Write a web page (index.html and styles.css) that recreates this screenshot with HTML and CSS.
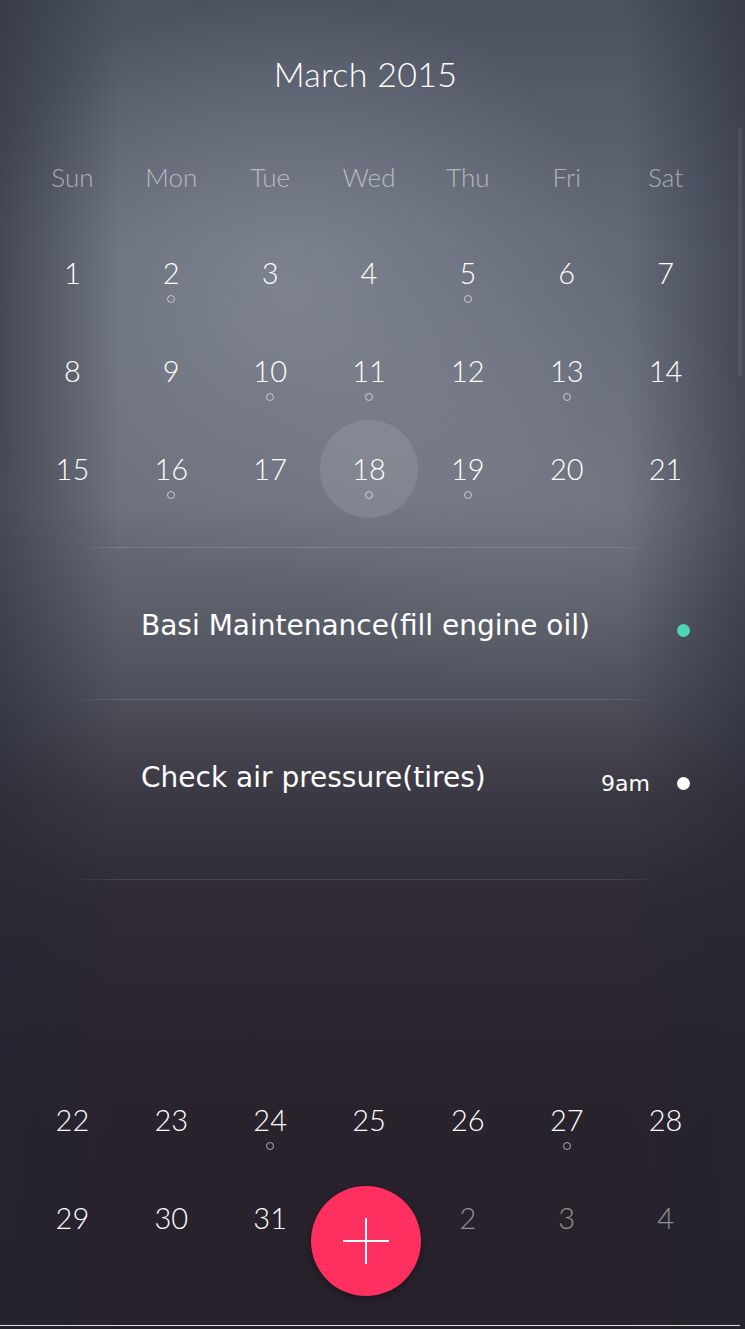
FILE: index.html
```html
<!DOCTYPE html>
<html lang="en">
<head>
<meta charset="utf-8">
<title>March 2015</title>
<link rel="stylesheet" href="styles.css">
</head>
<body>
<div class="app">
  <div class="scrollbar"></div>
  <header class="title">March 2015</header>
  <div class="weekdays">
    <span>Sun</span><span>Mon</span><span>Tue</span><span>Wed</span><span>Thu</span><span>Fri</span><span>Sat</span>
  </div>
  <div class="week">
    <div class="day"><span class="num">1</span></div>
    <div class="day"><span class="num">2</span><i class="mark"></i></div>
    <div class="day"><span class="num">3</span></div>
    <div class="day"><span class="num">4</span></div>
    <div class="day"><span class="num">5</span><i class="mark"></i></div>
    <div class="day"><span class="num">6</span></div>
    <div class="day"><span class="num">7</span></div>
  </div>
  <div class="week">
    <div class="day"><span class="num">8</span></div>
    <div class="day"><span class="num">9</span></div>
    <div class="day"><span class="num">10</span><i class="mark"></i></div>
    <div class="day"><span class="num">11</span><i class="mark"></i></div>
    <div class="day"><span class="num">12</span></div>
    <div class="day"><span class="num">13</span><i class="mark"></i></div>
    <div class="day"><span class="num">14</span></div>
  </div>
  <div class="week">
    <div class="day"><span class="num">15</span></div>
    <div class="day"><span class="num">16</span><i class="mark"></i></div>
    <div class="day"><span class="num">17</span></div>
    <div class="day selected"><span class="num">18</span><i class="mark"></i></div>
    <div class="day"><span class="num">19</span><i class="mark"></i></div>
    <div class="day"><span class="num">20</span></div>
    <div class="day"><span class="num">21</span></div>
  </div>

  <div class="divider first"></div>
  <div class="event event-a">
    <span class="event-name">Basi Maintenance(fill engine oil)</span>
    <span class="event-side"><i class="dot teal"></i></span>
  </div>
  <div class="divider"></div>
  <div class="event event-b">
    <span class="event-name">Check air pressure(tires)</span>
    <span class="event-side"><span class="time">9am</span><i class="dot white"></i></span>
  </div>
  <div class="divider"></div>

  <div class="spacer"></div>

  <div class="week">
    <div class="day"><span class="num">22</span></div>
    <div class="day"><span class="num">23</span></div>
    <div class="day"><span class="num">24</span><i class="mark"></i></div>
    <div class="day"><span class="num">25</span></div>
    <div class="day"><span class="num">26</span></div>
    <div class="day"><span class="num">27</span><i class="mark"></i></div>
    <div class="day"><span class="num">28</span></div>
  </div>
  <div class="week">
    <div class="day"><span class="num">29</span></div>
    <div class="day"><span class="num">30</span></div>
    <div class="day"><span class="num">31</span></div>
    <div class="day other"><span class="num">1</span></div>
    <div class="day other"><span class="num">2</span></div>
    <div class="day other"><span class="num">3</span></div>
    <div class="day other"><span class="num">4</span></div>
  </div>

  <button class="fab" aria-label="Add">
    <svg width="46" height="46" viewBox="0 0 46 46"><path d="M23 0V46M0 23H46" stroke="#fff" stroke-width="2" fill="none"/></svg>
  </button>

  <div class="bottom-line"></div>
</div>
</body>
</html>
```

FILE: styles.css
```css
* { box-sizing: border-box; }

html, body {
  margin: 0;
  padding: 0;
  width: 745px;
  height: 1329px;
  overflow: hidden;
}

body {
  background: #27212b;
  font-family: Lato, "Open Sans", sans-serif;
  color: #fff;
}

.app {
  position: relative;
  width: 745px;
  height: 1329px;
  display: flex;
  flex-direction: column;
  background:
    linear-gradient(90deg, rgba(35,38,50,0.5) 0%, rgba(35,38,50,0) 16%, rgba(35,38,50,0) 84%, rgba(35,38,50,0.5) 100%),
    radial-gradient(ellipse 330px 300px at 290px 290px, rgba(150,155,166,0.5), rgba(150,155,166,0) 100%),
    radial-gradient(ellipse 260px 220px at 520px 470px, rgba(140,145,155,0.28), rgba(140,145,155,0) 100%),
    linear-gradient(180deg, #4b515f 0%, #636977 18%, #6a6f7b 38%, #535661 50%, #3b3943 60%, #2f2a35 68%, #29232e 80%, #27212b 100%);
}

.scrollbar {
  position: absolute;
  right: 3px;
  top: 128px;
  width: 4px;
  height: 248px;
  border-radius: 2px;
  background: rgba(255,255,255,0.07);
}

.title {
  height: 130px;
  padding-top: 54px;
  text-align: center;
  font-size: 34px;
  line-height: 40px;
  font-weight: 300;
  letter-spacing: 0.3px;
  padding-right: 14px;
}

.weekdays {
  display: grid;
  grid-template-columns: repeat(7, 1fr);
  width: 692px;
  margin-left: 23px;
  height: 94px;
  padding-top: 32px;
  font-size: 26px;
  line-height: 30px;
  font-weight: 300;
  color: rgba(255,255,255,0.52);
  text-align: center;
}

.week {
  display: grid;
  grid-template-columns: repeat(7, 1fr);
  width: 692px;
  margin-left: 23px;
  height: 98px;
}

.day {
  display: flex;
  flex-direction: column;
  align-items: center;
  padding-top: 33px;
  border-radius: 50%;
}

.day .num {
  font-size: 29px;
  line-height: 32px;
  font-weight: 300;
  color: #fff;
}

.day.other .num {
  color: rgba(255,255,255,0.5);
}

.day.selected {
  background: rgba(255,255,255,0.1);
}

.mark {
  display: block;
  width: 8px;
  height: 8px;
  margin-top: 6px;
  border: 1.5px solid rgba(255,255,255,0.6);
  border-radius: 50%;
}

.divider {
  height: 1px;
  margin: 0 80px 0 65px;
  background: linear-gradient(90deg, rgba(255,255,255,0) 0%, rgba(255,255,255,0.13) 10%, rgba(255,255,255,0.13) 90%, rgba(255,255,255,0) 100%);
}

.divider.first {
  margin-top: 29px;
}

.event {
  display: flex;
  align-items: center;
  justify-content: space-between;
  padding: 0 55px 0 141px;
  font-family: "DejaVu Sans", Verdana, sans-serif;
}

.event-a {
  height: 151px;
  padding-top: 4px;
}

.event-b {
  height: 179px;
  align-items: flex-start;
  padding-top: 58px;
}

.event-name {
  font-size: 28px;
  line-height: 40px;
  color: #fff;
}

.event-side {
  display: flex;
  align-items: center;
  gap: 27px;
  height: 40px;
  padding-top: 10px;
}

.time {
  font-size: 22px;
  color: #fff;
}

.dot {
  display: block;
  width: 13px;
  height: 13px;
  border-radius: 50%;
}

.dot.teal { background: #4fd4b8; }
.dot.white { background: #fff; }

.spacer {
  height: 191px;
}

.fab {
  position: absolute;
  left: 311px;
  top: 1186px;
  width: 110px;
  height: 110px;
  border: none;
  border-radius: 50%;
  background: #ff2f60;
  box-shadow: 0 3px 8px rgba(0,0,0,0.35);
  display: flex;
  align-items: center;
  justify-content: center;
  padding: 0;
}

.fab svg { display: block; }

.bottom-line {
  position: absolute;
  left: 0;
  bottom: 3px;
  width: 740px;
  height: 1px;
  background: rgba(255,255,255,0.85);
}
```
